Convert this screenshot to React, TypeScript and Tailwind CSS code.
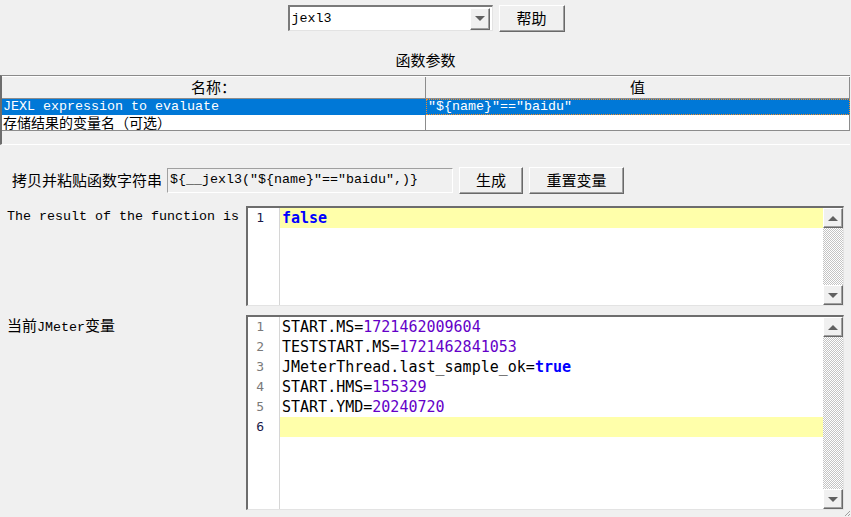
import React from "react";

const raised =
  "bg-[#f0f0f0] border border-t-white border-l-white border-b-[#696969] border-r-[#696969] shadow-[inset_-1px_-1px_0_#a0a0a0]";
const cjk = "font-['Noto_Sans_CJK_SC','Liberation_Sans',sans-serif]";
const mono = "font-['Liberation_Mono','Noto_Sans_CJK_SC',monospace]";
const code = "font-['DejaVu_Sans_Mono','Liberation_Mono',monospace]";

type Tok = { t: string; c?: "num" | "kw" };
type Line = Tok[];

function ScrollBar() {
  return (
    <div className="w-[20px] flex flex-col shrink-0">
      <div className={`${raised} h-[20px] flex items-center justify-center`}>
        <div className="w-0 h-0 border-x-[5px] border-x-transparent border-b-[5px] border-b-[#606060]" />
      </div>
      <div className="flex-1 bg-[repeating-conic-gradient(#c4c4c4_0%_25%,#ffffff_0%_50%)] bg-[length:2px_2px]" />
      <div className={`${raised} h-[20px] flex items-center justify-center`}>
        <div className="w-0 h-0 border-x-[5px] border-x-transparent border-t-[5px] border-t-[#606060]" />
      </div>
    </div>
  );
}

function Editor({ lines, current, height }: { lines: Line[]; current: number; height: string }) {
  return (
    <div className={`w-[598px] ${height} flex border-t-2 border-l-2 border-t-[#6d6d6d] border-l-[#6d6d6d] border-b border-r border-b-[#e3e3e3] border-r-[#e3e3e3] bg-white`}>
      <div className="w-[32px] border-r border-[#d6d6d6] shrink-0">
        {lines.map((_, i) => (
          <div
            key={i}
            className={`h-[20px] leading-[20px] text-right pr-[15px] text-[13px] ${code} ${i === current ? "text-[#1a1a4a]" : "text-[#7a7a7a]"}`}
          >
            {i + 1}
          </div>
        ))}
      </div>
      <div className="flex-1">
        {lines.map((ln, i) => (
          <div
            key={i}
            className={`h-[20px] leading-[20px] pl-[2px] text-[15px] whitespace-pre ${code} ${i === current ? "bg-[#ffffaa]" : ""}`}
          >
            {ln.map((tk, j) => (
              <span
                key={j}
                className={
                  tk.c === "num"
                    ? "text-[#6400c8]"
                    : tk.c === "kw"
                      ? "text-[#0000ff] font-bold"
                      : "text-black"
                }
              >
                {tk.t}
              </span>
            ))}
          </div>
        ))}
      </div>
      <ScrollBar />
    </div>
  );
}

const vars: Line[] = [
  [{ t: "START.MS=" }, { t: "1721462009604", c: "num" }],
  [{ t: "TESTSTART.MS=" }, { t: "1721462841053", c: "num" }],
  [{ t: "JMeterThread.last_sample_ok=" }, { t: "true", c: "kw" }],
  [{ t: "START.HMS=" }, { t: "155329", c: "num" }],
  [{ t: "START.YMD=" }, { t: "20240720", c: "num" }],
  [{ t: "" }],
];

export default function App() {
  return (
    <div className="relative w-[851px] h-[517px] bg-[#f0f0f0] flex flex-col overflow-hidden text-black">
      {/* function selector */}
      <div className="flex justify-center gap-[6px] pt-[5px] pl-[1px]">
        <div className="w-[205px] h-[26px] bg-white flex items-center border-t-2 border-l-2 border-t-[#7a7a7a] border-l-[#7a7a7a] border-b border-r border-b-[#e3e3e3] border-r-[#e3e3e3]">
          <span className={`flex-1 pl-[2px] text-[13.33px] ${mono}`}>jexl3</span>
          <div className={`${raised} w-[20px] h-[22px] mr-[2px] flex items-center justify-center`}>
            <div className="w-0 h-0 border-x-[5px] border-x-transparent border-t-[5px] border-t-[#606060]" />
          </div>
        </div>
        <button className={`${raised} w-[66px] h-[27px] text-[15px] ${cjk}`}>帮助</button>
      </div>

      <div className={`mt-[18px] h-[20px] leading-[20px] text-center text-[15px] ${cjk}`}>函数参数</div>

      {/* parameters table */}
      <div className="mt-[5px] h-[70px] w-[850px] border-t border-l-2 border-t-[#8a8a8a] border-l-[#6d6d6d] border-b border-b-[#ffffff] flex flex-col">
        <div className="flex h-[23px] border-b border-[#8c8c8c] border-t border-t-white">
          <div className={`w-[424px] border-r border-[#8c8c8c] flex items-center justify-center text-[15px] ${cjk}`}>
            名称：
          </div>
          <div className={`flex-1 border-r border-[#8c8c8c] flex items-center justify-center text-[15px] ${cjk}`}>
            值
          </div>
        </div>
        <div className="flex h-[16px] bg-[#0078d7] text-white">
          <div className={`w-[424px] border-r border-[#0078d7] leading-[16px] pl-[1px] text-[13.33px] whitespace-pre ${mono}`}>
            JEXL expression to evaluate
          </div>
          <div className={`flex-1 leading-[14px] pl-[1px] text-[13.33px] whitespace-pre border border-dotted border-[#f08c28] ${mono}`}>
            "${"{"}name{"}"}"=="baidu"
          </div>
        </div>
        <div className="flex h-[16px] bg-white border-b border-[#8c8c8c]">
          <div className={`w-[424px] border-r border-[#8c8c8c] leading-[15px] pl-[1px] text-[14px] ${cjk}`}>
            存储结果的变量名（可选）
          </div>
          <div className="flex-1 border-r border-[#8c8c8c]" />
        </div>
        <div className="flex-1" />
      </div>

      {/* function string */}
      <div className="mt-[22px] flex items-center h-[26px] pl-[12px]">
        <div className={`w-[155px] text-[15px] ${cjk}`}>拷贝并粘贴函数字符串</div>
        <div className={`w-[286px] h-[25px] flex items-center pl-[2px] text-[13.33px] whitespace-pre border-t border-l border-t-[#a0a0a0] border-l-[#a0a0a0] border-b border-r border-b-white border-r-white ${mono}`}>
          ${"{"}__jexl3("${"{"}name{"}"}"=="baidu",){"}"}
        </div>
        <button className={`${raised} ml-[6px] w-[64px] h-[27px] text-[15px] ${cjk}`}>生成</button>
        <button className={`${raised} ml-[6px] w-[95px] h-[27px] text-[15px] ${cjk}`}>重置变量</button>
      </div>

      {/* result */}
      <div className="mt-[13px] flex">
        <div className={`w-[246px] pl-[7px] pt-[1px] leading-[20px] text-[13.33px] whitespace-pre ${mono}`}>
          The result of the function is
        </div>
        <Editor lines={[[{ t: "false", c: "kw" }]]} current={0} height="h-[100px]" />
      </div>

      {/* variables */}
      <div className="mt-[9px] flex">
        <div className={`w-[246px] pl-[7px] leading-[20px] text-[15px] ${cjk}`}>
          当前<span className={`text-[13.33px] ${mono}`}>JMeter</span>变量
        </div>
        <Editor lines={vars} current={5} height="h-[195px]" />
      </div>

      {/* resize grip */}
      <svg className="absolute right-0 bottom-0" width="7" height="7" viewBox="0 0 7 7">
        <path d="M6 1 L1 6 M6 4 L4 6" stroke="#a0a0a0" strokeWidth="1" />
      </svg>
    </div>
  );
}
